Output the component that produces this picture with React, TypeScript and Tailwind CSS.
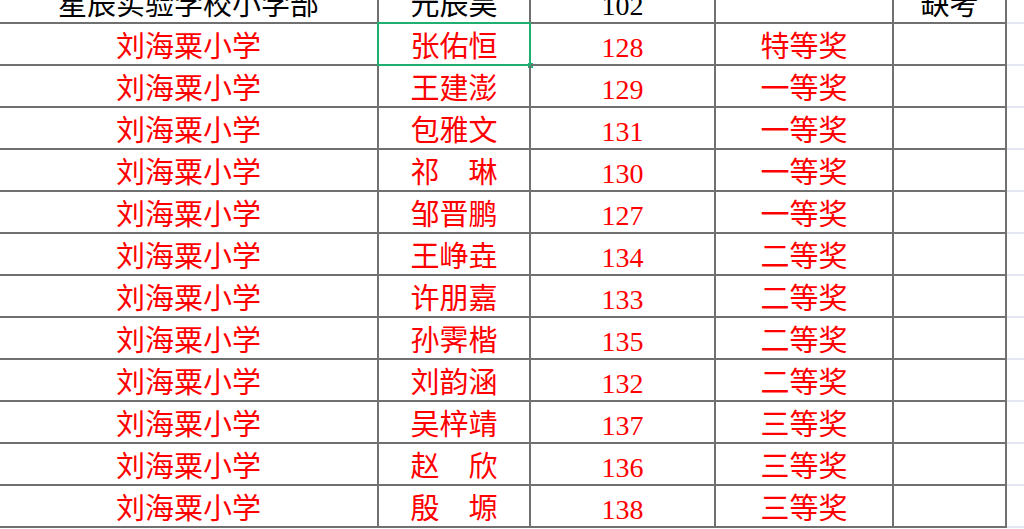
const rows: [string, string, string, string, string][] = [
  ['刘海粟小学', '张佑恒', '128', '特等奖', ''],
  ['刘海粟小学', '王建澎', '129', '一等奖', ''],
  ['刘海粟小学', '包雅文', '131', '一等奖', ''],
  ['刘海粟小学', '祁　琳', '130', '一等奖', ''],
  ['刘海粟小学', '邹晋鹏', '127', '一等奖', ''],
  ['刘海粟小学', '王峥垚', '134', '二等奖', ''],
  ['刘海粟小学', '许朋嘉', '133', '二等奖', ''],
  ['刘海粟小学', '孙霁楷', '135', '二等奖', ''],
  ['刘海粟小学', '刘韵涵', '132', '二等奖', ''],
  ['刘海粟小学', '吴梓靖', '137', '三等奖', ''],
  ['刘海粟小学', '赵　欣', '136', '三等奖', ''],
  ['刘海粟小学', '殷　塬', '138', '三等奖', ''],
]

const header = ['星辰实验学校小学部', '元辰昊', '102', '', '缺考']

const cell =
  'relative flex h-[42px] items-center justify-center border-b-2 border-r-2 border-[#707070] whitespace-nowrap'

// numbers in Times-like serif, chinese a touch larger like the sheet's SimSun
function Text({ value }: { value: string }) {
  const isNum = /^\d+$/.test(value)
  return <span className={isNum ? 'pt-[7px] text-[28px]' : 'pt-[7px] text-[29px]'}>{value}</span>
}

export default function App() {
  return (
    <div
      className="h-[529px] w-[1024px] overflow-hidden bg-white leading-none"
      style={{ fontFamily: '"Liberation Serif", "Noto Sans CJK SC", serif' }}
    >
      <div className="-mt-[18px] grid grid-cols-[379px_152px_185px_178px_113px_1fr]">
        {header.map((v, i) => (
          <div key={i} className={`${cell} text-black`}>
            <Text value={v} />
          </div>
        ))}
        <div className="h-[42px] border-b-2 border-[#e4e6f3]" />

        {rows.map((r, idx) => (
          <div key={idx} className="contents">
            {r.map((v, i) => (
              <div key={i} className={`${cell} text-[#ff0000]`}>
                <Text value={v} />
                {idx === 0 && i === 1 && (
                  <>
                    <div className="pointer-events-none absolute -left-[2px] -top-[2px] h-[44px] w-[154px] border-2 border-[#1fb071]" />
                    <div className="absolute -bottom-[4px] -right-[4px] h-[5px] w-[5px] bg-[#1fb071]" />
                  </>
                )}
              </div>
            ))}
            <div className="h-[42px] border-b-2 border-[#e4e6f3]" />
          </div>
        ))}
      </div>
    </div>
  )
}
